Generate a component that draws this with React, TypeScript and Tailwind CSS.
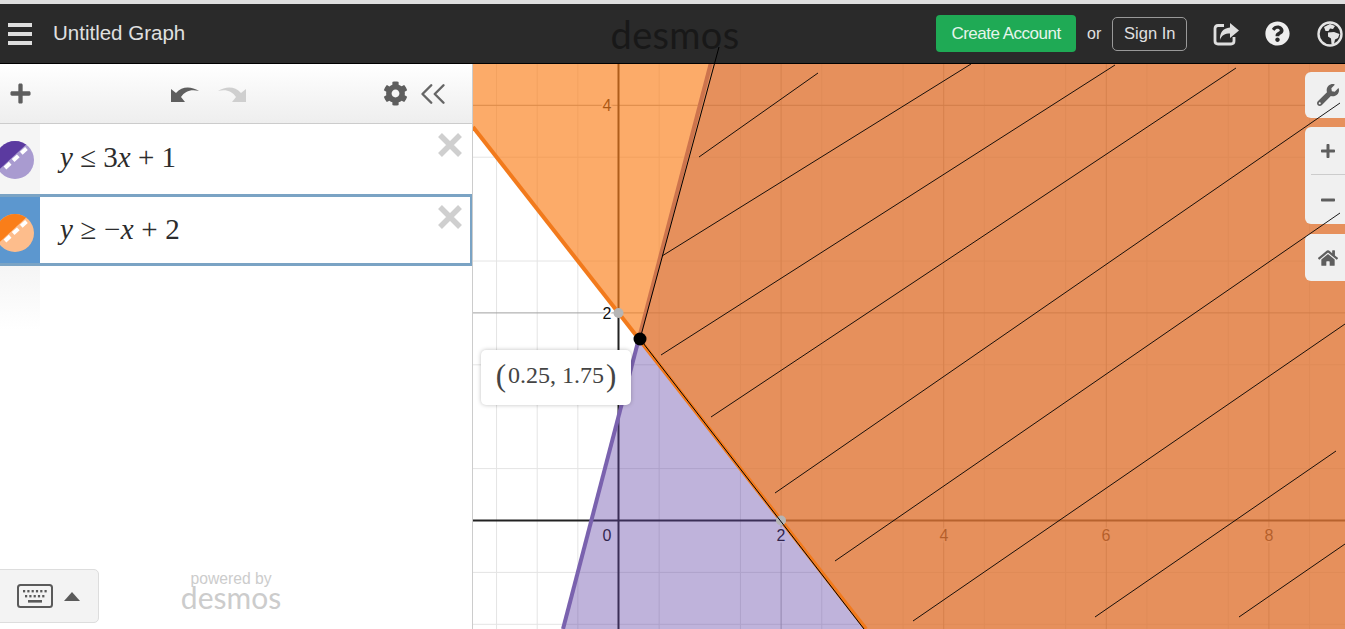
import { ChevronsLeft } from "lucide-react";
import { FaCog, FaHome, FaMinus, FaPlus, FaQuestionCircle, FaWrench } from "react-icons/fa";

const minorX = [-3, -2, -1, 1, 3, 5, 7, 9, 11, 13, 15, 17, 19, 21].map((n) => 618.5 + n * 40.65);
const majorX = [2, 4, 6, 8].map((n) => 618.5 + n * 81.3);
const minorY = [-2, -1, 1, 3, 5, 7, 9].map((n) => 520.5 - n * 51.9);
const majorY = [2, 4].map((n) => 520.5 - n * 103.8);

const xLabels = [
  { t: "2", x: 781 },
  { t: "4", x: 944 },
  { t: "6", x: 1106 },
  { t: "8", x: 1269 },
];

const hatch = [
  [699, 157, 818, 73],
  [662, 256, 971, 64],
  [661, 355, 1115, 65],
  [711, 417, 1236, 68],
  [775, 493, 1340, 103],
  [835, 561, 1340, 213],
  [913, 621, 1345, 324],
  [1095, 617, 1336, 451],
  [1239, 617, 1345, 544],
];

const keyDots = [0, 1, 2, 3, 4, 5];

function Graph() {
  return (
    <svg viewBox="473 64 872 565" className="absolute inset-0 h-full w-full">
      {minorX.map((x) => (
        <line key={x} x1={x} x2={x} y1={64} y2={629} stroke="#e4e4e4" strokeWidth={1} />
      ))}
      {minorY.map((y) => (
        <line key={y} x1={473} x2={1345} y1={y} y2={y} stroke="#e4e4e4" strokeWidth={1} />
      ))}
      {majorX.map((x) => (
        <line key={x} x1={x} x2={x} y1={64} y2={629} stroke="#b4b4b4" strokeWidth={1} />
      ))}
      {majorY.map((y) => (
        <line key={y} x1={473} x2={1345} y1={y} y2={y} stroke="#a0a0a0" strokeWidth={1} />
      ))}
      <line x1={618.5} x2={618.5} y1={64} y2={629} stroke="#222" strokeWidth={2} />
      <line x1={473} x2={1345} y1={520.5} y2={520.5} stroke="#222" strokeWidth={2} />
      <g fontFamily="'Liberation Sans', sans-serif" fontSize={16} fill="#111" stroke="#fff" strokeWidth={3} paintOrder="stroke" textAnchor="middle">
        <text x={607} y={111}>4</text>
        <text x={607} y={319}>2</text>
        <text x={607} y={541}>0</text>
        {xLabels.map((l) => (
          <text key={l.x} x={l.x} y={541}>{l.t}</text>
        ))}
      </g>
      <polygon points="710.6,64 563,629 1345,629 1345,64" fill="#6042a6" fillOpacity={0.4} />
      <line x1={710.6} y1={64} x2={563} y2={629} stroke="#7a62ae" strokeWidth={4} />
      <polygon points="473,127 473,64 1345,64 1345,629 866,629" fill="#fa7e19" fillOpacity={0.65} />
      <line x1={473} y1={127} x2={866} y2={629} stroke="#f27a1c" strokeWidth={4} />
      <circle cx={618.5} cy={313} r={5} fill="#b5b5b5" />
      <circle cx={781} cy={520.5} r={5} fill="#b5b5b5" />
    </svg>
  );
}

function ExprIcon({ id, dark, light, top }: { id: string; dark: string; light: string; top: string }) {
  return (
    <svg width="40" height="44" viewBox="0 0 40 44" className={top}>
      <clipPath id={id}>
        <circle cx="15" cy="22" r="19" />
      </clipPath>
      <g clipPath={`url(#${id})`}>
        <rect x="-5" y="0" width="45" height="44" fill={light} />
        <polygon points="-8,38 30,3 30,-4 -8,-4" fill={dark} />
      </g>
      <line x1="5" y1="30" x2="27" y2="10" stroke="#fff" strokeWidth="4" strokeDasharray="7 4" />
    </svg>
  );
}

function CurvedArrow({ className }: { className: string }) {
  return (
    <svg viewBox="0 0 30 18" className={className} fill="currentColor">
      <path d="M1 17 L1 4 L6 8 C12 1 21 1 29 6 C21 4 15 6 11 12 L15 17 Z" />
    </svg>
  );
}

function CloseMark({ className }: { className: string }) {
  return (
    <svg viewBox="0 0 26 26" className={className} fill="none" stroke="#cfcfcf" strokeWidth="5.5">
      <path d="M3 3 L23 23 M23 3 L3 23" />
    </svg>
  );
}

function ShareBox() {
  return (
    <svg viewBox="0 0 27 24" className="ml-[26px] h-[24px] w-[27px] shrink-0">
      <path d="M11 3.5 H5 Q2 3.5 2 6.5 V19 Q2 22 5 22 H18 Q21 22 21 19 V15" fill="none" stroke="#dedede" strokeWidth="2.8" />
      <path d="M17 1 L26 8.5 L17 16 V11.5 C12 11.5 8.5 13 7 18 C6.5 11 10 6 17 5.5 Z" fill="#dedede" />
    </svg>
  );
}

function Globe() {
  return (
    <svg viewBox="0 0 26 26" className="ml-[27px] h-[26px] w-[26px] shrink-0">
      <circle cx="13" cy="13" r="11.5" fill="none" stroke="#e4e4e4" strokeWidth="2.4" />
      <path d="M7 6 L13 3 L18 5 L16 8 L13 7.5 L11.5 10 L8.5 10 Z" fill="#e4e4e4" />
      <path d="M11 11.5 L17 11 L22.5 13 L21 17 L18 18.5 L17 23 L14.5 23 L14 17.5 L11 15.5 Z" fill="#e4e4e4" />
    </svg>
  );
}

function Keyboard() {
  return (
    <svg width="36" height="24" viewBox="0 0 36 24" className="ml-[21px] shrink-0">
      <rect x="1" y="1" width="34" height="22" rx="2.5" fill="none" stroke="#5a5a5a" strokeWidth="2" />
      {keyDots.map((n) => (
        <rect key={n} x={6 + n * 4.3} y="6" width="2.2" height="2.4" fill="#5a5a5a" />
      ))}
      {keyDots.slice(0, 5).map((n) => (
        <rect key={n} x={8 + n * 4.3} y="11" width="2.2" height="2.4" fill="#5a5a5a" />
      ))}
      <rect x="11" y="16" width="14" height="2.6" fill="#5a5a5a" />
    </svg>
  );
}

export default function App() {
  return (
    <div className="relative flex h-screen w-full flex-col overflow-hidden bg-white font-['Liberation_Sans',sans-serif]">
      <div className="h-[4px] bg-[#dedede]" />
      <header className="flex h-[60px] shrink-0 items-center border-b border-black bg-[#2a2a2a] text-[#e0e0e0]">
        <div className="ml-[8px] flex w-[24px] flex-col gap-[5px]">
          <div className="h-[4px] bg-[#dedede]" />
          <div className="h-[4px] bg-[#dedede]" />
          <div className="h-[4px] bg-[#dedede]" />
        </div>
        <span className="ml-[21px] w-[133px] text-[20.5px] leading-none whitespace-nowrap">Untitled Graph</span>
        <span className="ml-[424px] w-[130px] text-center font-['Lato',sans-serif] text-[38px] leading-none tracking-[0.3px] text-[#181818]">desmos</span>
        <div className="ml-[196px] flex h-[37px] w-[140px] items-center justify-center rounded-[4px] bg-[#1faa55] text-[17px] tracking-[-0.5px] text-[#e6f5ec]">Create Account</div>
        <span className="ml-[11px] text-[16px]">or</span>
        <div className="ml-[11px] flex h-[34px] w-[75px] items-center justify-center rounded-[5px] border border-[#999] text-[16.5px]">Sign In</div>
        <ShareBox />
        <FaQuestionCircle className="ml-[25px] h-[25px] w-[25px] shrink-0 text-[#eeeeee]" />
        <Globe />
      </header>
      <main className="flex min-h-0 flex-1">
        <aside className="relative flex w-[473px] shrink-0 flex-col border-r border-[#cccccc] bg-white">
          <div className="flex h-[60px] shrink-0 items-center border-b border-[#cccccc] bg-gradient-to-b from-white to-[#eeeeee] text-[#5e5e5e]">
            <FaPlus className="ml-[9px] h-[23px] w-[23px]" />
            <CurvedArrow className="ml-[138px] h-[18px] w-[30px]" />
            <CurvedArrow className="ml-[17px] h-[18px] w-[30px] -scale-x-100 text-[#cfcfcf]" />
            <FaCog className="ml-[136px] h-[25px] w-[25px]" />
            <ChevronsLeft strokeWidth={1.4} className="ml-[4px] h-[42px] w-[42px] text-[#666]" />
          </div>
          <div className="relative flex h-[70px] items-center">
            <div className="flex h-full w-[40px] items-center bg-[#f5f5f5]">
              <ExprIcon id="exprA" dark="#5b3aa0" light="#a99bd0" top="mt-[2px] shrink-0" />
            </div>
            <span className="ml-[20px] pb-[3px] font-['Liberation_Serif',serif] text-[29px] text-[#2c2c2c]"><i>y</i> ≤ 3<i>x</i> + 1</span>
            <CloseMark className="absolute top-[8px] right-[9px] h-[26px] w-[26px]" />
          </div>
          <div className="relative flex h-[72px] items-center border-y-[3px] border-r-[2px] border-[#7aa3c4]">
            <div className="flex h-full w-[40px] items-center bg-[#5c97cf]">
              <ExprIcon id="exprB" dark="#fa7e19" light="#fdbd8c" top="mt-[5px] shrink-0" />
            </div>
            <span className="ml-[20px] font-['Liberation_Serif',serif] text-[29px] tracking-[0.2px] text-[#2c2c2c]"><i>y</i> ≥ −<i>x</i> + 2</span>
            <CloseMark className="absolute top-[7px] right-[7px] h-[26px] w-[26px]" />
          </div>
          <div className="h-[64px] w-[40px] bg-gradient-to-b from-[#f5f5f5] to-white" />
          <div className="mt-auto mb-[6px] flex items-end">
            <div className="ml-[-5px] flex h-[54px] w-[104px] items-center rounded-[5px] border border-[#dddddd] bg-[#f3f3f3] text-[#5a5a5a]">
              <Keyboard />
              <div className="ml-[11px] h-0 w-0 border-x-[8px] border-b-[9px] border-x-transparent border-b-[#5a5a5a]" />
            </div>
            <div className="mb-[15px] ml-[80px] flex w-[104px] flex-col items-center text-[#cccccc]">
              <span className="text-[15.7px] leading-[15px]">powered by</span>
              <span className="font-['Lato',sans-serif] text-[30px] leading-[22px]">desmos</span>
            </div>
          </div>
        </aside>
        <section className="relative min-w-0 flex-1 overflow-hidden">
          <Graph />
          <div className="absolute top-[286px] left-[8px] flex h-[55px] w-[150px] items-center justify-center rounded-[5px] bg-white pb-[5px] font-['Liberation_Serif',serif] text-[24px] text-[#444] shadow-[0_0_4px_rgba(0,0,0,0.25)]">
            <span className="text-[31px] leading-none font-light">(</span>
            <span className="mx-[2px]">0.25, 1.75</span>
            <span className="text-[31px] leading-none font-light">)</span>
          </div>
          <div className="absolute top-[8px] right-0 flex w-[40px] flex-col text-[#5e5e5e]">
            <div className="flex h-[46px] items-center justify-center rounded-l-[6px] bg-[#f0f0f0] pl-[6px]">
              <FaWrench className="h-[22px] w-[22px]" />
            </div>
            <div className="mt-[9px] flex flex-col rounded-l-[6px] bg-[#f0f0f0] pl-[6px]">
              <div className="flex h-[48px] items-center justify-center border-b border-[#cccccc]">
                <FaPlus className="h-[16px] w-[16px]" />
              </div>
              <div className="flex h-[49px] items-center justify-center">
                <FaMinus className="h-[16px] w-[16px]" />
              </div>
            </div>
            <div className="mt-[10px] flex h-[47px] items-center justify-center rounded-l-[6px] bg-[#f0f0f0] pl-[6px]">
              <FaHome className="h-[20px] w-[20px]" />
            </div>
          </div>
        </section>
      </main>
      {/* pen marks drawn over the whole page */}
      <svg viewBox="0 0 1345 629" className="pointer-events-none absolute top-0 left-0 h-[629px] w-[1345px]">
        <polyline points="719,47 640,339 864,629" fill="none" stroke="#000" strokeWidth={1} />
        {hatch.map((h) => (
          <line key={h[0]} x1={h[0]} y1={h[1]} x2={h[2]} y2={h[3]} stroke="#000" strokeWidth={0.9} />
        ))}
        <circle cx={640} cy={339} r={6.5} fill="#000" />
      </svg>
    </div>
  );
}
